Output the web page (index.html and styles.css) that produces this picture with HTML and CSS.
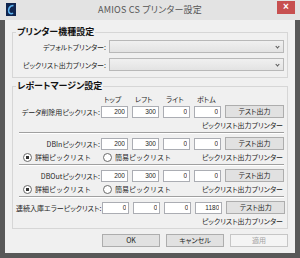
FILE: index.html
```html
<!DOCTYPE html>
<html lang="ja">
<head>
    <meta charset="UTF-8" />
    <title>AMIOS CS プリンター設定</title>
    <link rel="stylesheet" href="styles.css">
</head>
<body>
    <div class="window">
        <div class="titlebar">
            <svg class="app-icon" width="10" height="13" viewBox="0 0 10 13">
                <rect width="10" height="13" fill="#10254f" />
                <path d="M7.5 2.5 C3 2.5 1.8 7 3 9.5 C4 11 6 11 7 10" fill="none" stroke="#5fb4f0" stroke-width="1.6" />
            </svg>
            <span class="title">AMIOS CS プリンター設定</span>
            <span class="close">×</span>
        </div>

        <div class="client">
            <fieldset class="group group-printer">
                <legend>プリンター機種設定</legend>
                <div class="field">
                    <label>デフォルトプリンター:</label>
                    <div class="select"><span class="chevron"></span></div>
                </div>
                <div class="field">
                    <label>ピックリスト出力プリンター:</label>
                    <div class="select"><span class="chevron"></span></div>
                </div>
            </fieldset>

            <fieldset class="group group-margin">
                <legend>レポートマージン設定</legend>

                <div class="margin-row head">
                    <span></span>
                    <span>トップ</span>
                    <span>レフト</span>
                    <span>ライト</span>
                    <span>ボトム</span>
                    <span></span>
                </div>

                <div class="margin-row">
                    <label>データ削除用ピックリスト:</label>
                    <input class="num" value="200">
                    <input class="num" value="300">
                    <input class="num" value="0">
                    <input class="num" value="0">
                    <button class="btn">テスト出力</button>
                </div>
                <div class="sub-row">
                    <span class="caption">ピックリスト出力プリンター</span>
                </div>
                <hr class="sep">

                <div class="margin-row">
                    <label>DBInピックリスト:</label>
                    <input class="num" value="200">
                    <input class="num" value="300">
                    <input class="num" value="0">
                    <input class="num" value="0">
                    <button class="btn">テスト出力</button>
                </div>
                <div class="sub-row">
                    <span class="radio checked">詳細ピックリスト</span>
                    <span class="radio">簡易ピックリスト</span>
                    <span class="caption">ピックリスト出力プリンター</span>
                </div>
                <hr class="sep">

                <div class="margin-row">
                    <label>DBOutピックリスト:</label>
                    <input class="num" value="200">
                    <input class="num" value="300">
                    <input class="num" value="0">
                    <input class="num" value="0">
                    <button class="btn">テスト出力</button>
                </div>
                <div class="sub-row">
                    <span class="radio checked">詳細ピックリスト</span>
                    <span class="radio">簡易ピックリスト</span>
                    <span class="caption">ピックリスト出力プリンター</span>
                </div>
                <hr class="sep">

                <div class="margin-row">
                    <label>連続入庫エラーピックリスト:</label>
                    <input class="num" value="0">
                    <input class="num" value="0">
                    <input class="num" value="0">
                    <input class="num" value="1180">
                    <button class="btn">テスト出力</button>
                </div>
                <div class="sub-row">
                    <span class="caption">ピックリスト出力プリンター</span>
                </div>
            </fieldset>

            <div class="actions">
                <button class="btn">OK</button>
                <button class="btn">キャンセル</button>
                <button class="btn" disabled>適用</button>
            </div>
        </div>
    </div>
</body>
</html>
```

FILE: styles.css
```css
/* Dialog colours */
:root {
    --frame: #585858;
    --title-bg: #e3e3e3;
    --client-bg: #f0f0f0;
    --group-line: #d6d6d6;
    --field-line: #abadb3;
    --btn-bg: #e1e1e1;
    --btn-line: #adadad;
    --text: #1e1e1e;
}

* {
    margin: 0;
    padding: 0;
    box-sizing: border-box;
}

body {
    width: 300px;
    height: 258px;
    font-family: "Noto Sans CJK JP", "Liberation Sans", sans-serif;
    font-feature-settings: "palt";
    color: var(--text);
    background: var(--frame);
    overflow: hidden;
}

.window {
    height: 258px;
    display: flex;
    flex-direction: column;
}

/* Title bar */
.titlebar {
    height: 20px;
    background: var(--title-bg);
    display: flex;
    align-items: center;
    padding: 0 5px 0 6px;
    position: relative;
}

.app-icon {
    display: block;
    margin-top: -1px;
}

.title {
    position: absolute;
    left: 0;
    right: 0;
    text-align: center;
    font-size: 9px;
    color: #555;
    letter-spacing: 0.2px;
    line-height: 20px;
}

.close {
    position: absolute;
    top: 1px;
    right: 5px;
    width: 18px;
    height: 13px;
    background: #c75050;
    color: #fff;
    font-family: "Liberation Sans", sans-serif;
    font-size: 10px;
    font-weight: bold;
    line-height: 12px;
    text-align: center;
}

/* Client area */
.client {
    flex: 1;
    margin: 0 5px 5px;
    background: var(--client-bg);
    padding: 0 7px;
}

.group {
    border: 1px solid var(--group-line);
    padding: 0 3px;
    min-width: 0;
}

.group legend {
    font-size: 9px;
    font-weight: bold;
    line-height: 12px;
    padding: 0 1px;
    color: #111;
}

.group-printer {
    margin-top: 6px;
    padding-top: 2px;
    padding-bottom: 6px;
}

.field {
    display: grid;
    grid-template-columns: 90px 1fr;
    column-gap: 3px;
    align-items: center;
    height: 13px;
}

.field + .field {
    margin-top: 5px;
}

.field label {
    text-align: right;
    font-size: 7px;
    white-space: nowrap;
}

.select {
    height: 13px;
    border: 1px solid #b8b8b8;
    background: linear-gradient(#f0f0f0, #e3e3e3);
    position: relative;
}

.chevron {
    position: absolute;
    right: 4px;
    top: 4px;
    width: 3px;
    height: 3px;
    border-right: 1px solid #555;
    border-bottom: 1px solid #555;
    transform: rotate(45deg);
}

.group-margin {
    margin-top: 2px;
    padding-top: 2px;
    padding-bottom: 2px;
}

.margin-row {
    display: grid;
    grid-template-columns: 1fr 27px 27px 27px 27px 59px;
    column-gap: 4px;
    align-items: center;
    height: 13px;
}

.margin-row.head {
    height: 10px;
    margin-bottom: 1px;
    font-size: 7px;
}

.margin-row.head span {
    padding-left: 3px;
}

.margin-row label {
    text-align: right;
    font-size: 7px;
    white-space: nowrap;
    margin-right: -3px;
}

.num {
    height: 12px;
    width: 27px;
    border: 1px solid var(--field-line);
    background: #fff;
    font-family: "Liberation Sans", sans-serif;
    font-size: 6.5px;
    text-align: right;
    padding: 0 2px;
    color: var(--text);
    outline: none;
}

.btn {
    height: 13px;
    border: 1px solid var(--btn-line);
    background: var(--btn-bg);
    font-family: "Noto Sans CJK JP", "Liberation Sans", sans-serif;
    font-feature-settings: "palt";
    font-size: 7px;
    color: var(--text);
    line-height: 11px;
}

.btn:disabled {
    background: #f4f4f4;
    border-color: #c6c6c6;
    color: #a3a3a3;
}

.sub-row {
    display: flex;
    align-items: center;
    height: 10px;
    margin-top: 2px;
    padding-left: 7px;
    font-size: 7px;
}

.caption {
    margin-left: auto;
    margin-right: 1px;
}

.radio {
    display: flex;
    align-items: center;
    gap: 3px;
    font-feature-settings: normal;
    margin-right: 12px;
}

.radio::before {
    content: '';
    width: 7px;
    height: 7px;
    border: 1px solid #6a6a6a;
    border-radius: 50%;
    background: #fff;
}

.radio.checked::before {
    background: radial-gradient(circle, #333 0 1.6px, #fff 2px);
}

.sep {
    border: none;
    border-top: 1px solid #a0a0a0;
    border-bottom: 1px solid #fff;
    margin: 2px 0 3px 3px;
}

.actions {
    display: flex;
    justify-content: flex-end;
    gap: 6px;
    margin-top: 5px;
}

.actions .btn {
    width: 58px;
}
```
